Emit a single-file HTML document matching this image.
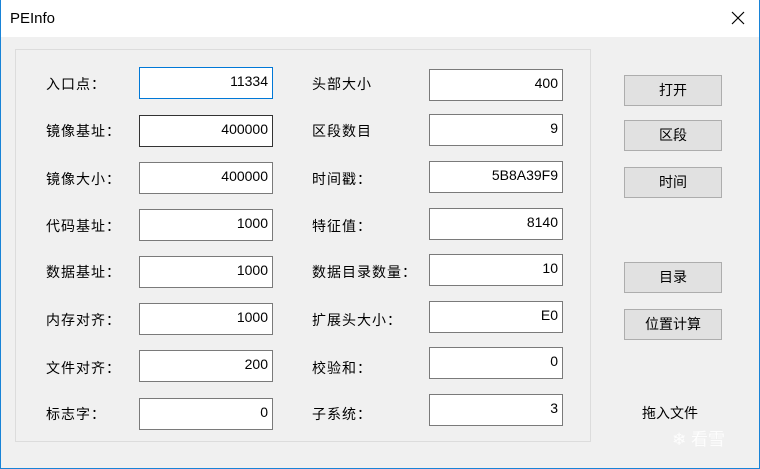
<!DOCTYPE html>
<html><head><meta charset="utf-8"><style>
*{margin:0;padding:0;box-sizing:border-box}
body{width:760px;height:469px;background:#f0f0f0;position:relative;overflow:hidden;font-family:"Liberation Sans","Noto Sans CJK SC",sans-serif;font-size:14px;color:#000}
.win{position:absolute;left:0;top:0;width:760px;height:469px;border:1px solid #1883d7;border-top:none}
.title{position:absolute;left:0;top:0;width:760px;height:37px;background:#fff}
.title span{position:absolute;left:10px;top:10px;font-size:15px}
.x{position:absolute;left:730px;top:10px;width:16px;height:16px}
.grp{position:absolute;left:15px;top:49px;width:576px;height:393px;border:1px solid #dcdcdc}
.lb{position:absolute;font-size:14px;letter-spacing:1px}
.ed{position:absolute;width:134px;height:32px;background:#fff;border:1px solid #7a7a7a;text-align:right;padding-right:4px;line-height:26px;font-size:14px}
.bt{position:absolute;left:624px;width:98px;height:31px;background:#e1e1e1;border:1px solid #adadad;text-align:center;line-height:29px;font-size:14px}
</style></head><body>
<div class="title"><span>PEInfo</span>
<svg class="x" viewBox="0 0 16 16"><path d="M2 2L14 14M14 2L2 14" stroke="#000" stroke-width="1.2"/></svg></div>
<div class="win"></div>
<div class="grp"></div>

<div class="lb" style="left:46px;top:74px">入口点：</div>
<div class="lb" style="left:46px;top:121px">镜像基址：</div>
<div class="lb" style="left:46px;top:169px">镜像大小：</div>
<div class="lb" style="left:46px;top:216px">代码基址：</div>
<div class="lb" style="left:46px;top:262px">数据基址：</div>
<div class="lb" style="left:46px;top:310px">内存对齐：</div>
<div class="lb" style="left:46px;top:358px">文件对齐：</div>
<div class="lb" style="left:46px;top:404px">标志字：</div>

<div class="ed" style="left:139px;top:67px;border-color:#0078d7">11334</div>
<div class="ed" style="left:139px;top:115px;border-color:#333">400000</div>
<div class="ed" style="left:139px;top:162px">400000</div>
<div class="ed" style="left:139px;top:209px">1000</div>
<div class="ed" style="left:139px;top:256px">1000</div>
<div class="ed" style="left:139px;top:303px">1000</div>
<div class="ed" style="left:139px;top:350px">200</div>
<div class="ed" style="left:139px;top:398px">0</div>

<div class="lb" style="left:312px;top:74px">头部大小</div>
<div class="lb" style="left:312px;top:121px">区段数目</div>
<div class="lb" style="left:312px;top:169px">时间戳：</div>
<div class="lb" style="left:312px;top:216px">特征值：</div>
<div class="lb" style="left:312px;top:262px">数据目录数量：</div>
<div class="lb" style="left:312px;top:310px">扩展头大小：</div>
<div class="lb" style="left:312px;top:358px">校验和：</div>
<div class="lb" style="left:312px;top:404px">子系统：</div>

<div class="ed" style="left:429px;top:69px">400</div>
<div class="ed" style="left:429px;top:114px">9</div>
<div class="ed" style="left:429px;top:161px">5B8A39F9</div>
<div class="ed" style="left:429px;top:208px">8140</div>
<div class="ed" style="left:429px;top:254px">10</div>
<div class="ed" style="left:429px;top:301px">E0</div>
<div class="ed" style="left:429px;top:347px">0</div>
<div class="ed" style="left:429px;top:394px">3</div>

<div class="bt" style="top:75px">打开</div>
<div class="bt" style="top:120px">区段</div>
<div class="bt" style="top:167px">时间</div>
<div class="bt" style="top:262px">目录</div>
<div class="bt" style="top:309px">位置计算</div>
<div class="lb" style="left:642px;top:403px;letter-spacing:0">拖入文件</div>
<div style="position:absolute;left:672px;top:425px;color:#fff;font-size:17px;opacity:.9">❄ 看雪</div>
</body></html>
